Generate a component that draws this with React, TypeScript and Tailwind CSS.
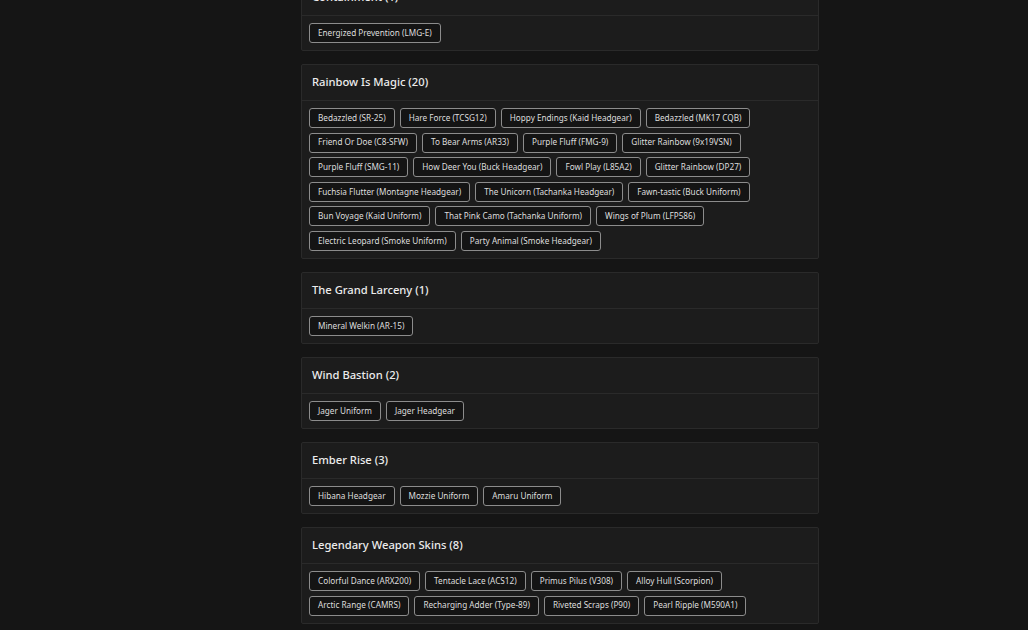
import React from "react";

interface Section {
  title: string;
  items: string[];
}

const sections: Section[] = [
  { title: "Containment", items: ["Energized Prevention (LMG-E)"] },
  {
    title: "Rainbow Is Magic",
    items: [
      "Bedazzled (SR-25)",
      "Hare Force (TCSG12)",
      "Hoppy Endings (Kaid Headgear)",
      "Bedazzled (MK17 CQB)",
      "Friend Or Doe (C8-SFW)",
      "To Bear Arms (AR33)",
      "Purple Fluff (FMG-9)",
      "Glitter Rainbow (9x19VSN)",
      "Purple Fluff (SMG-11)",
      "How Deer You (Buck Headgear)",
      "Fowl Play (L85A2)",
      "Glitter Rainbow (DP27)",
      "Fuchsia Flutter (Montagne Headgear)",
      "The Unicorn (Tachanka Headgear)",
      "Fawn-tastic (Buck Uniform)",
      "Bun Voyage (Kaid Uniform)",
      "That Pink Camo (Tachanka Uniform)",
      "Wings of Plum (LFP586)",
      "Electric Leopard (Smoke Uniform)",
      "Party Animal (Smoke Headgear)",
    ],
  },
  { title: "The Grand Larceny", items: ["Mineral Welkin (AR-15)"] },
  { title: "Wind Bastion", items: ["Jager Uniform", "Jager Headgear"] },
  { title: "Ember Rise", items: ["Hibana Headgear", "Mozzie Uniform", "Amaru Uniform"] },
  {
    title: "Legendary Weapon Skins",
    items: [
      "Colorful Dance (ARX200)",
      "Tentacle Lace (ACS12)",
      "Primus Pilus (V308)",
      "Alloy Hull (Scorpion)",
      "Arctic Range (CAMRS)",
      "Recharging Adder (Type-89)",
      "Riveted Scraps (P90)",
      "Pearl Ripple (M590A1)",
    ],
  },
];

function SkinCard({ title, items }: Section) {
  return (
    <div className="bg-[#1c1c1c] border border-[#2a2a2a] rounded-[2px]">
      <div className="h-[36px] flex items-center px-[10px] border-b border-[#2a2a2a]">
        <h3 className="text-[11.2px] font-medium text-[#ececec]">
          {title} ({items.length})
        </h3>
      </div>
      <div className="flex flex-wrap gap-x-[5px] gap-y-[4.6px] p-[7px]">
        {items.map((item) => (
          <button
            key={item}
            className="h-[20px] px-[8px] bg-[#141414] border border-[#8c8c8c] rounded-[3px] text-[8.2px] text-[#dedede] leading-none"
          >
            {item}
          </button>
        ))}
      </div>
    </div>
  );
}

export default function App() {
  return (
    <div
      className="w-[1028px] h-[630px] overflow-hidden bg-[#151515]"
      style={{ fontFamily: '"Noto Sans", "Open Sans", sans-serif' }}
    >
      <div className="ml-[301px] w-[518px] mt-[-21px] flex flex-col gap-[13px]">
        {sections.map((s) => (
          <SkinCard key={s.title} {...s} />
        ))}
      </div>
    </div>
  );
}
